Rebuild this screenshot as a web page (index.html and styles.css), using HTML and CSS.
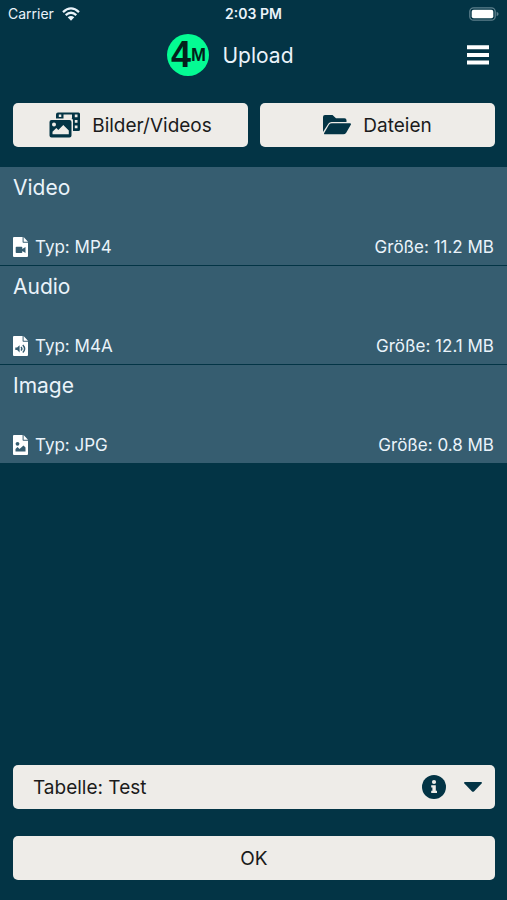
FILE: index.html
```html
<!DOCTYPE html>
<html lang="de">
<head>
<meta charset="utf-8">
<meta name="viewport" content="width=device-width, initial-scale=1">
<title>Upload</title>
<link rel="stylesheet" href="styles.css">
</head>
<body>
<div class="status">
  <div class="carrier">
    <span>Carrier</span>
    <svg width="18" height="14" viewBox="0 0 18 14" aria-hidden="true">
      <g fill="none" stroke="currentColor" stroke-width="2.3">
        <path d="M1 5.1Q9-2.3 17 5.1"/>
        <path d="M3.7 8.1Q9 3.3 14.3 8.1"/>
      </g>
      <path fill="currentColor" d="M5.7 10.2Q9 7.6 12.3 10.2L9 13.7z"/>
    </svg>
  </div>
  <time class="clock">2:03 PM</time>
  <svg class="battery" width="30" height="14" viewBox="0 0 30 14" aria-hidden="true">
    <rect x=".8" y=".8" width="25.4" height="12.4" rx="3.8" fill="none" stroke="#5d7f8c" stroke-width="1.3"/>
    <rect x="2.7" y="2.7" width="21.6" height="8.6" rx="2" fill="#fff"/>
    <path d="M27.6 4.8q2 .7 2 2.2t-2 2.2z" fill="#5d7f8c"/>
  </svg>
</div>

<header class="header">
  <div class="brand">
    <span class="logo"><span class="logo-four">4</span><span class="logo-m">M</span></span>
    <h1 class="title">Upload</h1>
  </div>
  <button class="menu" type="button" aria-label="Menü">
    <svg width="22" height="20" viewBox="0 0 22 20" aria-hidden="true">
      <path fill="currentColor" d="M0 .3h22v4H0zM0 7.9h22v4H0zM0 15.5h22v4H0z"/>
    </svg>
  </button>
</header>

<main class="main">
  <div class="sources">
    <button class="button" type="button">
      <svg width="31" height="26" viewBox="0 0 31 26" aria-hidden="true">
        <path fill="#033445" fill-rule="evenodd" d="M9 .5h20.500q1.500 0 1.500 1.500v15.500q0 1.500-1.500 1.500H24V8.500q0-2-2-2H7V2.500q0-2 2-2zM9.800 2.500v2.500h2.500V2.500zM14.500 2.500v4h8.500v-4zM25.800 2.500v2.800h2.700V2.500zM25.800 8v2.800h2.700V8zM25.800 13.500v2.800h2.700v-2.800z"/>
        <path fill="#033445" fill-rule="evenodd" d="M2.500 8h18q2 0 2 2v13.500q0 2-2 2h-18q-2 0-2-2V10q0-2 2-2zM5 10.500a2 2 0 1 0 0 4 2 2 0 0 0 0-4zM3.500 22.300h16.300v-3.800l-5.500-5.500-5 5-2-2-3.800 3.800z"/>
      </svg>
      <span>Bilder/Videos</span>
    </button>
    <button class="button" type="button">
      <svg width="28" height="20" viewBox="0 0 28 20" aria-hidden="true">
        <path fill="#033445" d="M2 0h7.500l3.500 3.200h8.500q2 0 2 2V7H8.500Q6.500 7 5.500 8.600L0 17V2q0-2 2-2z"/>
        <path fill="#033445" d="M9 8.300h18q1.600 0 .8 1.400l-4.600 8q-1 1.600-3 1.600H2q-1.500 0-.8-1.400l4.900-8.300q1-1.300 2.900-1.300z"/>
      </svg>
      <span>Dateien</span>
    </button>
  </div>

  <ul class="files">
    <li class="file">
      <h2 class="name">Video</h2>
      <div class="meta">
        <span class="type">
          <svg width="15" height="20" viewBox="0 0 15 20" aria-hidden="true">
            <path fill="#fff" d="M1 0h8.600v5q0 .7.700.7H15V19q0 1-1 1H1q-1 0-1-1V1q0-1 1-1zM10.600 0 15 4.700h-4.400z"/>
            <path fill="#365d70" d="M3.500 9.800h5q.8 0 .8.800v1.300l3.200-2v6l-3.200-2v1.300q0 .8-.8.800h-5q-.8 0-.8-.8v-4.600q0-.8.800-.8z"/>
          </svg>
          Typ: MP4
        </span>
        <span>Größe: 11.2 MB</span>
      </div>
    </li>
    <li class="file">
      <h2 class="name">Audio</h2>
      <div class="meta">
        <span class="type">
          <svg width="15" height="20" viewBox="0 0 15 20" aria-hidden="true">
            <path fill="#fff" d="M1 0h8.600v5q0 .7.700.7H15V19q0 1-1 1H1q-1 0-1-1V1q0-1 1-1zM10.600 0 15 4.700h-4.400z"/>
            <path fill="#365d70" d="M2.300 11.500h1.800l2.500-2.300v7.200l-2.500-2.300H2.300z"/>
            <path fill="none" stroke="#365d70" stroke-width="1.400" d="M8 11q1.800 1.800 0 3.600M9.800 9q3.600 3.800 0 7.600"/>
          </svg>
          Typ: M4A
        </span>
        <span>Größe: 12.1 MB</span>
      </div>
    </li>
    <li class="file">
      <h2 class="name">Image</h2>
      <div class="meta">
        <span class="type">
          <svg width="15" height="20" viewBox="0 0 15 20" aria-hidden="true">
            <path fill="#fff" d="M1 0h8.600v5q0 .7.700.7H15V19q0 1-1 1H1q-1 0-1-1V1q0-1 1-1zM10.600 0 15 4.700h-4.400z"/>
            <circle cx="4.500" cy="8.800" r="1.900" fill="#365d70"/>
            <path fill="#365d70" d="M2.500 16.500v-2.400l2-2 2 2 4-3.500 2 2v3.900z"/>
          </svg>
          Typ: JPG
        </span>
        <span>Größe: 0.8 MB</span>
      </div>
    </li>
  </ul>
</main>

<footer class="footer">
  <div class="picker">
    <select class="select" aria-label="Tabelle">
      <option>Tabelle: Test</option>
    </select>
    <button class="info" type="button" aria-label="Information">
      <svg width="24" height="24" viewBox="0 0 24 24" aria-hidden="true">
        <circle cx="12" cy="12" r="12" fill="#033445"/>
        <circle cx="12" cy="7" r="2.100" fill="#eeece8"/>
        <path fill="#eeece8" d="M9.200 10.200h4.600v5.500h1.200v2.400H9.200v-2.400h1.200v-3.100H9.200z"/>
      </svg>
    </button>
    <svg width="18" height="10" viewBox="0 0 18 10" aria-hidden="true">
      <path fill="#033445" d="M1 0h16q1.500 0 .6 1.400l-7.400 7.900q-1.200 1-2.400 0L.4 1.400Q-.5 0 1 0z"/>
    </svg>
  </div>
  <button class="button" type="button">OK</button>
</footer>
</body>
</html>
```

FILE: styles.css
```css
* {
  box-sizing: border-box;
}

body {
  display: flex;
  flex-direction: column;
  min-height: 100vh;
  margin: 0;
  background: #033445;
  color: #eaf3fa;
  font-family: Inter, "Liberation Sans", sans-serif;
}

button,
select {
  margin: 0;
  border: 0;
  font: inherit;
}

svg {
  display: block;
  flex: none;
}

.status {
  display: grid;
  grid-template-columns: 1fr auto 1fr;
  align-items: center;
  height: 27px;
  padding: 0 8px;
  font-size: 14px;
}

.carrier {
  display: flex;
  align-items: center;
  gap: 8px;
}

.clock {
  font-weight: 600;
}

.battery {
  justify-self: end;
}

.header {
  display: grid;
  grid-template-columns: 1fr auto 1fr;
  align-items: center;
  height: 56px;
  padding: 0 18px;
}

.brand {
  display: flex;
  grid-column: 2;
  align-items: center;
  gap: 13px;
  margin-right: 46px;
}

.logo {
  display: flex;
  align-items: center;
  justify-content: center;
  width: 42px;
  height: 42px;
  border-radius: 50%;
  background: #04fb93;
  color: #031f1c;
  font-family: "Liberation Sans", sans-serif;
  font-weight: 700;
  line-height: 42px;
}

.logo-four {
  font-size: 36px;
}

.logo-m {
  font-size: 18px;
}

.title,
.name {
  margin: 0;
  font-size: 21px;
  font-weight: 400;
}

.menu {
  justify-self: end;
  padding: 0;
  background: none;
  color: #fff;
}

.main {
  flex: 1;
}

.sources {
  display: grid;
  grid-template-columns: 1fr 1fr;
  gap: 12px;
  padding: 20px 12px 20px 13px;
}

.button {
  display: flex;
  align-items: center;
  justify-content: center;
  gap: 12px;
  height: 44px;
  padding: 0;
  border-radius: 5px;
  background: #eeece8;
  color: #1b1b1b;
  font-size: 19px;
}

.files {
  display: grid;
  gap: 1px;
  margin: 0;
  padding: 0;
  list-style: none;
}

.file {
  display: flex;
  flex-direction: column;
  justify-content: space-between;
  height: 98px;
  padding: 8px 13px;
  background: #365d70;
}

.name {
  line-height: 26px;
}

.meta,
.type {
  display: flex;
  align-items: center;
}

.meta {
  justify-content: space-between;
  font-size: 17px;
  line-height: 20px;
}

.type {
  gap: 7px;
}

.footer {
  display: grid;
  gap: 27px;
  padding: 0 12px 20px 13px;
}

.picker {
  display: grid;
  grid-template-columns: 1fr auto auto;
  align-items: center;
  column-gap: 18px;
  padding-right: 13px;
  border-radius: 5px;
  background: #eeece8;
}

.select {
  height: 44px;
  padding: 0 20px;
  appearance: none;
  background: none;
  color: #1b1b1b;
  font-size: 19px;
}

.info {
  padding: 0;
  background: none;
}
```
